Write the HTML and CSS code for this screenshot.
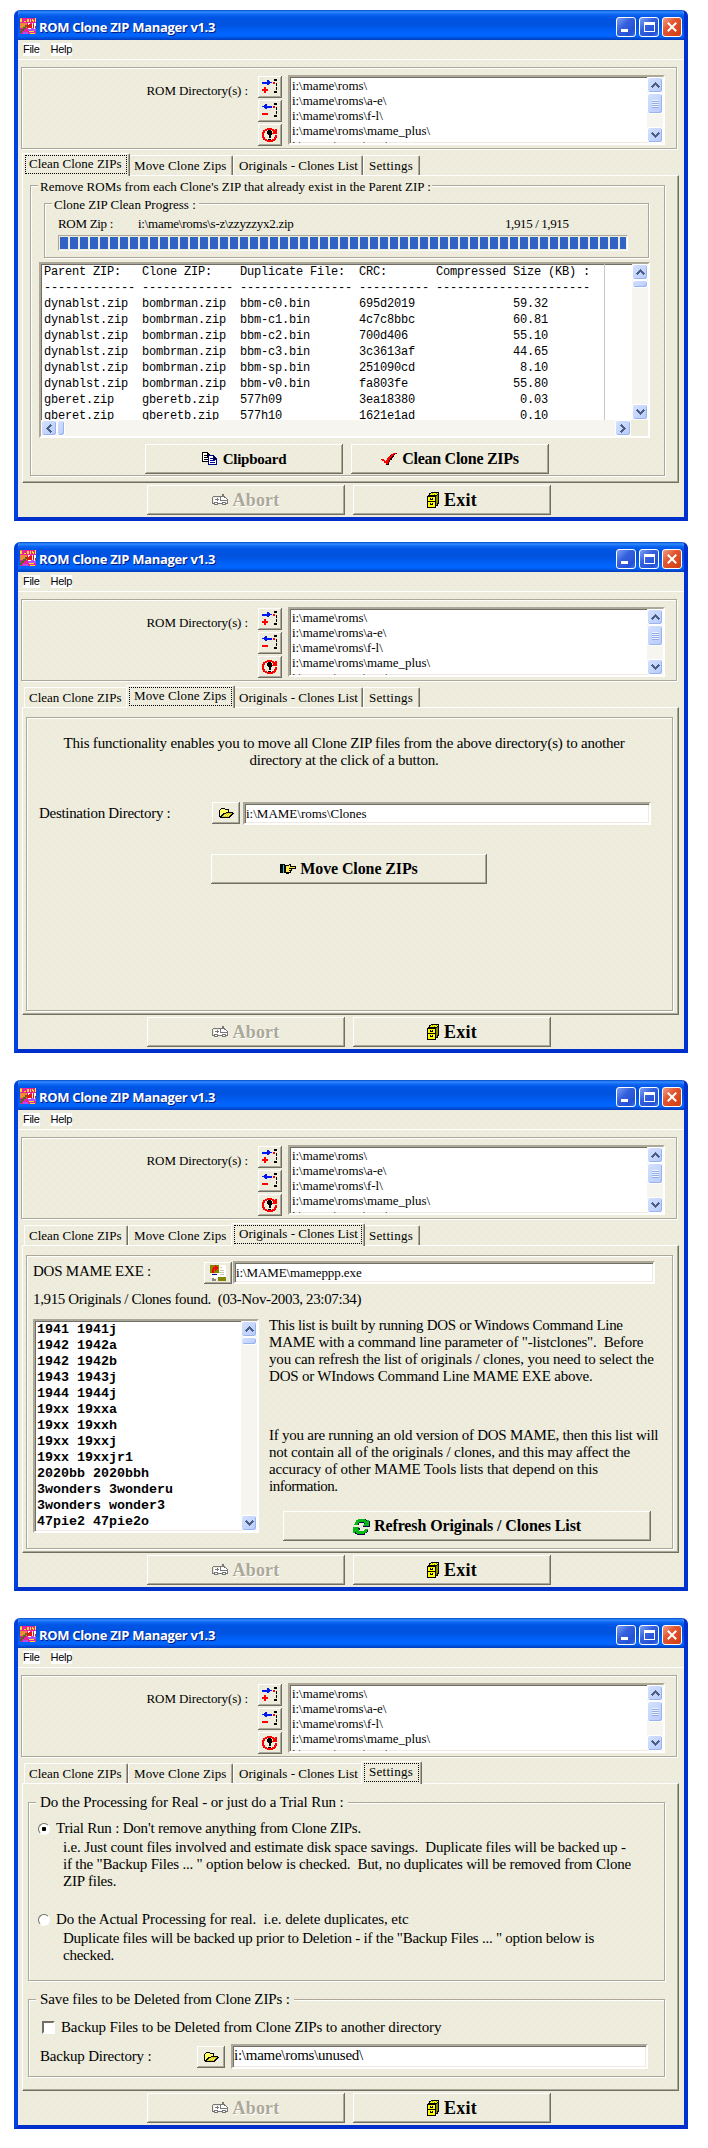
FILE: index.html
```html
<!DOCTYPE html>
<html lang="en">
<head>
<meta charset="utf-8">
<title>ROM Clone ZIP Manager v1.3</title>
<link rel="stylesheet" href="styles.css">
</head>
<body>
<svg class="defs" aria-hidden="true">
  <symbol id="i-app" viewBox="0 0 16 16"><path fill="#e8209c" d="M0 0h16v16H0z"/><path fill="#f08838" d="M0 5h7v5H0zM0 0h2v3H0z"/><path fill="#ffdc30" d="M0 1h2v3H0zM3 0h1v4h2v-1H4V0zM7 1h2v3H7zM10 1h1v3h-1zM12 1h1v1h1v2h-1zM15 0h1v4h-1zM9 13h5v1H9zM10 15h5v1h-5z"/><path fill="#b050f0" d="M8 9h8v4H8zM3 14h5v2H3z"/><path fill="#506820" d="M5 7h2v2H5zM3 9h3v2H3zM1 11h3v2H1zM0 13h2v2H0z"/><path fill="#e01818" d="M7 6h9v4H7z"/><path fill="#fff" d="M8 5h2v1h-1v4h2v1H8v-1h1V7H8zM12 5h1v5h-1zM14 5h2v3h-1v3h-1z"/></symbol>
  <symbol id="i-add" viewBox="0 0 16 16"><path fill="#0018f0" d="M0 3h5V1h2v1h1v1h2v1H8v1H7v1H5V5H0z"/><path fill="#f00" d="M2 8h2v2h2v2H4v2H2v-2H0v-2h2zM11 3h2v2h-2z"/><path d="M12 0h3v2h-3zM14 4h1v3h-1zM14 8h1v3h-1zM12 12h3v2h-3z"/></symbol>
  <symbol id="i-del" viewBox="0 0 16 16"><path fill="#0018f0" d="M10 3H5V1H3v1H2v1H0v1h2v1h1v1h2V5h5z"/><path fill="#f00" d="M0 10h6v2H0zM11 3h2v2h-2z"/><path d="M12 0h3v2h-3zM14 4h1v3h-1zM14 8h1v3h-1zM12 12h3v2h-3z"/></symbol>
  <symbol id="i-reload" viewBox="0 0 16 16"><path fill="#f00" d="M5 1h5v1h2v1h1V2h2v5h-5V6h1V4h-1V3H5v1H3v2H2v4h1v2h2v1h5v-1h2v-2h1V8h2v3h-1v2h-1v1h-2v1H5v-1H3v-1H1v-2H0V5h1V3h2V2h2z"/><path d="M6 3h3v1h1v4H9v3H7V8H6V7H5V4h1zM6 12h3v1H6z"/></symbol>
  <symbol id="i-copy" viewBox="0 0 16 14"><path fill="#fff" stroke="#000" d="M.5.5h5l3 3v6h-8z"/><path stroke="#000" d="M2 3.5h3M2 5.500h4M2 7.500h4M5.500 1v3h3"/><path fill="#fff" stroke="#00008b" d="M6.500 3.500h5l3 3v6h-8z"/><path stroke="#00008b" d="M8 6.500h3M8 8.500h5M8 10.500h5M11.500 4v3h3"/></symbol>
  <symbol id="i-check" viewBox="0 0 16 14"><path fill="#300" d="M1 8h3v1h2V7h1V5h2V3h2V2h2V1h3v1h-2v1h-1v2h-1v1h-1v2H9v2H8v3H5v-2H3V9H1z"/><path fill="#f00" d="M0 7h3v1h1v1h1V8h1V6h1V5h1V4h2V2h2V1h3v1h-2v1h-1v1h-1v1h-1v1h-1v2H8v2H7v2H5v-1H3V9H1V8H0z"/></symbol>
  <symbol id="i-abort" viewBox="0 0 16 12"><path fill="#fff" d="M2 4h7V2h3v2h3v5H2z"/><path fill="none" stroke="#777" d="M.5 2.500h8v4h7M.5 2.500v7h2m3 0h5m3 0h2v-4l-2-2-2-1h-3M3 5.500h4M5 4v3M10.500 2V.5h1V2"/><circle cx="4" cy="9.500" r="1.500" fill="#fff" stroke="#777"/><circle cx="12" cy="9.500" r="1.500" fill="#fff" stroke="#777"/></symbol>
  <symbol id="i-exit" viewBox="0 0 12 16"><path d="M1 3h1V1h2V0h8v12h-1v2H9v2H0V4h1z"/><path fill="#ff0" d="M1 5h7v10H1z"/><path fill="#8a8600" d="M9 4h1V3h1v8h-1v2H9z"/><path fill="#ff0" d="M3 2h1V1h7v1h-1v1H3z"/><path fill="#8a8600" d="M5 1h1v1H5zM7 2h1v1H7zM9 1h1v1H9z"/><path d="M1 9h7v1H1zM3 6h3v2H3zM3 11h3v2H3z"/><path fill="#ff0" d="M4 6h1v1H4zM4 11h1v1H4z"/></symbol>
  <symbol id="i-open" viewBox="0 0 15 11"><path d="M2 0h4v1h4v3h4v1h1v1h-1v1h-1v1h-1v1h-1v1H1V9H0V2h1V1h1z"/><path fill="#ff6" d="M2 1h4v1h3v2H7v1H4v1H3v1H2v1H1V2h1z"/><path fill="#d8cc20" d="M5 6h2V5h6v1h-1v1h-1v1h-1v1H3V8h1V7h1z"/><path fill="#ff6" d="M6 6h1v1H6zM8 6h1v1H8zM10 6h1v1h-1zM5 7h1v1H5zM7 7h1v1H7zM9 7h1v1H9z"/></symbol>
  <symbol id="i-hand" viewBox="0 0 16 10"><path d="M0 0h5v9H0z"/><path fill="#20d8e8" d="M3 1h1v8H3z"/><path d="M5 1h4V0h2v2h5v3h-4v2h-1v2H9v1H6V9H5z"/><path fill="#ffe84a" d="M6 2h3V1h1v2h5v1H9v1h2v1H9v1h1v1H7V8H6z"/></symbol>
  <symbol id="i-refresh" viewBox="0 0 17 17"><path fill="#060848" d="M3 5V3h2V1h8v1h2v1h2v6h-7V7h1V5H6v2H2zM0 10h7v2H6v2h5v-2h4v2h-1v1h-2v2H4v-1H2v-1H0z"/><path fill="#08b818" d="M1 6h1V4h1V2h2V1h7v1h1v1h1V2h2v6h-6V7h1V6h1V5h-1V4H6v1H5v2H1zM0 9h6v1H5v1h1v2h5v-1h1v-1h3v1h-1v2h-1v1h-2v1H4v-1H3v-1H2v1H0z"/></symbol>
  <symbol id="i-exe" viewBox="0 0 16 16"><path fill="#fff" d="M6 0h10v13H1V9h5z"/><path fill="#858500" d="M0 0h9v8H0zM8 12h8v4H8z"/><path fill="#f00" d="M2 4h1V2h2V0h1v1h1v1h1v2H7v1H6v1H5V4H4v4H2z"/><path fill="#ccc8b0" d="M10 2h2v1h-2zM10 5h4v1h-4zM9 7h5v1H9zM10 9h4v1h-4z"/><path fill="#00008b" d="M2 9h5v1H2z"/><path fill="#888" d="M2 13h2v1h2v2H2z"/></symbol>
  <symbol id="i-up" viewBox="0 0 9 6"><path d="M4 0h1v1h1v1h1v1h1v1h1v1H8v1H7V5H6V4H5V3H4v1H3v1H2v1H1V5H0V4h1V3h1V2h1V1h1z"/></symbol>
  <symbol id="i-down" viewBox="0 0 9 6"><path d="M4 6h1V5h1V4h1V3h1V2h1V1H8V0H7v1H6v1H5v1H4V2H3V1H2V0H1v1H0v1h1v1h1v1h1v1h1z"/></symbol>
  <symbol id="i-left" viewBox="0 0 6 9"><path d="M0 4h1V3h1V2h1V1h1V0h1v1h1v1H5v1H4v1H3v1h1v1h1v1h1v1H5v1H4V8H3V7H2V6H1V5H0z"/></symbol>
  <symbol id="i-right" viewBox="0 0 6 9"><path d="M6 4H5V3H4V2H3V1H2V0H1v1H0v1h1v1h1v1h1v1H2v1H1v1H0v1h1v1h1V8h1V7h1V6h1V5h1z"/></symbol>
</svg>

<main class="page">

<section class="win">
  <header class="title"><svg class="app"><use href="#i-app"/></svg><h1>ROM Clone ZIP Manager v1.3</h1><span class="cap min"></span><span class="cap max"></span><span class="cap close"></span></header>
  <nav class="menu"><span>File</span><span>Help</span></nav>
  <div class="dirs"><label>ROM Directory(s) :</label>
    <div class="tools"><button class="btn"><svg><use href="#i-add"/></svg></button><button class="btn"><svg><use href="#i-del"/></svg></button><button class="btn"><svg><use href="#i-reload"/></svg></button></div>
    <div class="box dirlist"><div class="lines">i:\mame\roms\<br>i:\mame\roms\a-e\<br>i:\mame\roms\f-l\<br>i:\mame\roms\mame_plus\<br>i:\mame\roms\m-r\</div>
      <div class="vbar"><i class="sb"><svg><use href="#i-up"/></svg></i><i class="thumb grip"></i><i class="sb end"><svg><use href="#i-down"/></svg></i></div></div>
  </div>
  <div class="tabs"><span class="tab t1 on">Clean Clone ZIPs</span><span class="tab t2">Move Clone Zips</span><span class="tab t3">Originals - Clones List</span><span class="tab t4">Settings</span></div>
  <div class="panel clean">
    <div class="group outer"><span class="legend sm">Remove ROMs from each Clone's ZIP that already exist in the Parent ZIP :</span>
      <div class="group prog"><span class="legend sm">Clone ZIP Clean Progress :</span>
        <div class="status"><span class="k">ROM Zip :</span><span class="f">i:\mame\roms\s-z\zzyzzyx2.zip</span><span class="n">1,915 / 1,915</span></div>
        <div class="bar"><div class="fill"></div></div>
      </div>
      <div class="box report">
        <div class="row"><pre>Parent ZIP:   Clone ZIP:    Duplicate File:  CRC:       Compressed Size (KB) :
------------- ------------- ---------------- ---------- ----------------------
dynablst.zip  bombrman.zip  bbm-c0.bin       695d2019              59.32
dynablst.zip  bombrman.zip  bbm-c1.bin       4c7c8bbc              60.81
dynablst.zip  bombrman.zip  bbm-c2.bin       700d406               55.10
dynablst.zip  bombrman.zip  bbm-c3.bin       3c3613af              44.65
dynablst.zip  bombrman.zip  bbm-sp.bin       251090cd               8.10
dynablst.zip  bombrman.zip  bbm-v0.bin       fa803fe               55.80
gberet.zip    gberetb.zip   577h09           3ea18380               0.03
gberet.zip    gberetb.zip   577h10           1621e1ad               0.10</pre>
        <div class="vbar"><i class="sb"><svg><use href="#i-up"/></svg></i><i class="thumb short"></i><i class="sb end"><svg><use href="#i-down"/></svg></i></div></div>
        <div class="hrow"><div class="hbar"><i class="sb"><svg class="h"><use href="#i-left"/></svg></i><i class="thumb"></i><i class="sb end"><svg class="h"><use href="#i-right"/></svg></i></div></div>
      </div>
      <div class="pair"><button class="btn b15"><svg class="w16x14"><use href="#i-copy"/></svg>Clipboard</button><button class="btn b16"><svg class="w16x14"><use href="#i-check"/></svg>Clean Clone ZIPs</button></div>
    </div>
  </div>
  <footer class="foot"><button class="btn off"><svg class="w16x12"><use href="#i-abort"/></svg>Abort</button><button class="btn"><svg class="w12x16"><use href="#i-exit"/></svg>Exit</button></footer>
</section>

<section class="win">
  <header class="title"><svg class="app"><use href="#i-app"/></svg><h1>ROM Clone ZIP Manager v1.3</h1><span class="cap min"></span><span class="cap max"></span><span class="cap close"></span></header>
  <nav class="menu"><span>File</span><span>Help</span></nav>
  <div class="dirs"><label>ROM Directory(s) :</label>
    <div class="tools"><button class="btn"><svg><use href="#i-add"/></svg></button><button class="btn"><svg><use href="#i-del"/></svg></button><button class="btn"><svg><use href="#i-reload"/></svg></button></div>
    <div class="box dirlist"><div class="lines">i:\mame\roms\<br>i:\mame\roms\a-e\<br>i:\mame\roms\f-l\<br>i:\mame\roms\mame_plus\<br>i:\mame\roms\m-r\</div>
      <div class="vbar"><i class="sb"><svg><use href="#i-up"/></svg></i><i class="thumb grip"></i><i class="sb end"><svg><use href="#i-down"/></svg></i></div></div>
  </div>
  <div class="tabs"><span class="tab t1">Clean Clone ZIPs</span><span class="tab t2 on">Move Clone Zips</span><span class="tab t3">Originals - Clones List</span><span class="tab t4">Settings</span></div>
  <div class="panel">
    <div class="group full move">
      <p class="intro">This functionality enables you to move all Clone ZIP files from the above directory(s) to another<br>directory at the click of a button.</p>
      <div class="field dest"><label class="s30">Destination Directory :</label><button class="btn"><svg class="w15x11"><use href="#i-open"/></svg></button><div class="box input">i:\MAME\roms\Clones</div></div>
      <button class="btn b16 go"><svg class="w16x10"><use href="#i-hand"/></svg>Move Clone ZIPs</button>
    </div>
  </div>
  <footer class="foot"><button class="btn off"><svg class="w16x12"><use href="#i-abort"/></svg>Abort</button><button class="btn"><svg class="w12x16"><use href="#i-exit"/></svg>Exit</button></footer>
</section>

<section class="win">
  <header class="title"><svg class="app"><use href="#i-app"/></svg><h1>ROM Clone ZIP Manager v1.3</h1><span class="cap min"></span><span class="cap max"></span><span class="cap close"></span></header>
  <nav class="menu"><span>File</span><span>Help</span></nav>
  <div class="dirs"><label>ROM Directory(s) :</label>
    <div class="tools"><button class="btn"><svg><use href="#i-add"/></svg></button><button class="btn"><svg><use href="#i-del"/></svg></button><button class="btn"><svg><use href="#i-reload"/></svg></button></div>
    <div class="box dirlist"><div class="lines">i:\mame\roms\<br>i:\mame\roms\a-e\<br>i:\mame\roms\f-l\<br>i:\mame\roms\mame_plus\<br>i:\mame\roms\m-r\</div>
      <div class="vbar"><i class="sb"><svg><use href="#i-up"/></svg></i><i class="thumb grip"></i><i class="sb end"><svg><use href="#i-down"/></svg></i></div></div>
  </div>
  <div class="tabs"><span class="tab t1">Clean Clone ZIPs</span><span class="tab t2">Move Clone Zips</span><span class="tab t3 on">Originals - Clones List</span><span class="tab t4">Settings</span></div>
  <div class="panel">
    <div class="group full orig">
      <div class="field exe"><label>DOS MAME EXE :</label><button class="btn"><svg><use href="#i-exe"/></svg></button><div class="box input">i:\MAME\mameppp.exe</div></div>
      <p class="found s36">1,915 Originals / Clones found.&nbsp; (03-Nov-2003, 23:07:34)</p>
      <div class="cols">
        <div class="box games"><pre>1941 1941j
1942 1942a
1942 1942b
1943 1943j
1944 1944j
19xx 19xxa
19xx 19xxh
19xx 19xxj
19xx 19xxjr1
2020bb 2020bbh
3wonders 3wonderu
3wonders wonder3
47pie2 47pie2o</pre>
          <div class="vbar"><i class="sb"><svg><use href="#i-up"/></svg></i><i class="thumb short"></i><i class="sb end"><svg><use href="#i-down"/></svg></i></div></div>
        <div class="notes">
          <p><span class="s30">This list is built by running DOS or Windows Command Line</span><br>MAME with a command line parameter of "-listclones".&nbsp; Before<br><span class="s17">you can refresh the list of originals / clones, you need to select the</span><br>DOS or WIndows Command Line MAME EXE above.</p>
          <p><span class="s25">If you are running an old version of DOS MAME, then this list will</span><br>not contain all of the originals / clones, and this may affect the<br><span class="s14">accuracy of other MAME Tools lists that depend on this</span><br><span class="s50">information.</span></p>
          <button class="btn b16 go"><svg class="w17x17"><use href="#i-refresh"/></svg>Refresh Originals / Clones List</button>
        </div>
      </div>
    </div>
  </div>
  <footer class="foot"><button class="btn off"><svg class="w16x12"><use href="#i-abort"/></svg>Abort</button><button class="btn"><svg class="w12x16"><use href="#i-exit"/></svg>Exit</button></footer>
</section>

<section class="win">
  <header class="title"><svg class="app"><use href="#i-app"/></svg><h1>ROM Clone ZIP Manager v1.3</h1><span class="cap min"></span><span class="cap max"></span><span class="cap close"></span></header>
  <nav class="menu"><span>File</span><span>Help</span></nav>
  <div class="dirs"><label>ROM Directory(s) :</label>
    <div class="tools"><button class="btn"><svg><use href="#i-add"/></svg></button><button class="btn"><svg><use href="#i-del"/></svg></button><button class="btn"><svg><use href="#i-reload"/></svg></button></div>
    <div class="box dirlist"><div class="lines">i:\mame\roms\<br>i:\mame\roms\a-e\<br>i:\mame\roms\f-l\<br>i:\mame\roms\mame_plus\<br>i:\mame\roms\m-r\</div>
      <div class="vbar"><i class="sb"><svg><use href="#i-up"/></svg></i><i class="thumb grip"></i><i class="sb end"><svg><use href="#i-down"/></svg></i></div></div>
  </div>
  <div class="tabs"><span class="tab t1">Clean Clone ZIPs</span><span class="tab t2">Move Clone Zips</span><span class="tab t3">Originals - Clones List</span><span class="tab t4 on">Settings</span></div>
  <div class="panel settings">
    <div class="group mode"><span class="legend s12">Do the Processing for Real - or just do a Trial Run :</span>
      <div class="opt"><i class="radio sel"></i>Trial Run : Don't remove anything from Clone ZIPs.</div>
      <p><span class="s17">i.e. Just count files involved and estimate disk space savings.&nbsp; Duplicate files will be backed up -</span><br>if the "Backup Files ... " option below is checked.&nbsp; But, no duplicates will be removed from Clone<br>ZIP files.</p>
      <div class="opt second s09"><i class="radio"></i>Do the Actual Processing for real.&nbsp; i.e. delete duplicates, etc</div>
      <p class="s25">Duplicate files will be backed up prior to Deletion - if the "Backup Files ... " option below is<br>checked.</p>
    </div>
    <div class="group save"><span class="legend s12">Save files to be Deleted from Clone ZIPs :</span>
      <div class="opt chk s14"><i class="check"></i>Backup Files to be Deleted from Clone ZIPs to another directory</div>
      <div class="field back"><label>Backup Directory :</label><button class="btn"><svg class="w15x11"><use href="#i-open"/></svg></button><div class="box input">i:\mame\roms\unused\</div></div>
    </div>
  </div>
  <footer class="foot"><button class="btn off"><svg class="w16x12"><use href="#i-abort"/></svg>Abort</button><button class="btn"><svg class="w12x16"><use href="#i-exit"/></svg>Exit</button></footer>
</section>

</main>
</body>
</html>
```
FILE: styles.css
```css
:root {
  --face: #eeeddd;
  --mid: #aca899;
  --dark: #716f64;
}
* { box-sizing: border-box; }
body {
  margin: 0;
  background: #fff;
  color: #000;
  font: 15px/17px "Liberation Serif", serif;
  letter-spacing: -.2px;
}
p, h1, pre { margin: 0; }
svg { display: block; width: 16px; height: 16px; shape-rendering: crispEdges; flex: none; }
.defs { position: absolute; width: 0; height: 0; }

.page { display: flex; flex-direction: column; padding: 10px 0 19px 14px; }
.win {
  display: flex; flex-direction: column;
  width: 674px; height: 511px;
  border: 4px solid #0042e0; border-top: 0;
  border-right-color: #0030d0;
  border-bottom-color: #0030cc;
  border-radius: 6px 6px 0 0;
  background-color: var(--face);
  background-image: radial-gradient(circle, #f2e4d6 .6px, transparent 1px), radial-gradient(circle, #e9ead6 .6px, transparent 1px);
  background-size: 8px 8px, 8px 8px;
  background-position: 0 0, 4px 4px;
  overflow: hidden;
}
.win + .win { margin-top: 27px; }
.win:nth-child(2) { margin-top: 21px; }

/* Title bar */
.title {
  display: flex; align-items: center;
  height: 30px; margin: 0 -4px; padding: 0 6px;
  background: linear-gradient(#0748c8 0, #2f8cff 2px, #1068f4 4px, #0055e5 7px, #0052de 14px, #0062fa 22px, #0066ff 26px, #0050d8 28px, #003cc0 30px);
}
.title .app { margin-top: 2px; }
.title h1 {
  flex: 1; padding: 0 0 0 3px; margin-top: 4px;
  color: #fff; font: bold 13px/16px "Open Sans", sans-serif; letter-spacing: -.33px;
  text-shadow: 1px 1px 0 #001a80;
}
.cap {
  position: relative;
  width: 20px; height: 20px; margin: 3px 0 0 3px;
  border: 1px solid #fff; border-radius: 3px;
  background: linear-gradient(135deg, #7ea2f4, #3560dd 40%, #2450d6 80%, #3c78f0);
}
.cap.close { background: linear-gradient(135deg, #f0a088, #e25530 40%, #d03c10); }
.min::before { content: ""; position: absolute; left: 4px; bottom: 4px; width: 7px; height: 3px; background: #fff; }
.max::before { content: ""; position: absolute; inset: 4px 3px 4px 4px; border: 1px solid #fff; border-top-width: 3px; }
.close::before, .close::after { content: ""; position: absolute; left: 3px; top: 8px; width: 12px; height: 2px; background: #fff; transform: rotate(45deg); }
.close::after { transform: rotate(-45deg); }

/* Menu bar */
.menu {
  display: flex; gap: 11px; align-items: flex-start;
  height: 20px; padding: 3px 0 0 5px;
  border-bottom: 1px solid #fff;
  font: 11px/13px "Liberation Sans", sans-serif; letter-spacing: -.3px;
}
.menu span { background: #fff; }

/* Common bevels */
.btn {
  display: flex; align-items: center; justify-content: center;
  margin: 0; padding: 0; border: 0;
  background: transparent;
  box-shadow: inset -1px -1px 0 var(--dark), inset 1px 1px 0 #fff, inset -2px -2px 0 var(--mid);
  color: #000; font: bold 18px/20px "Liberation Serif", serif; letter-spacing: .22px;
  gap: 5px; white-space: nowrap;
}
.b15 { font-size: 15px; letter-spacing: -.26px; }
.b16 { font-size: 16px; letter-spacing: -.11px; }
.clean .b16 { letter-spacing: -.28px; }
.btn.off { color: #aca899; text-shadow: 1px 1px 0 #fff; }
.box {
  background: #fff;
  border: 2px solid; border-color: var(--mid) #fff #fff var(--mid);
  box-shadow: inset 1px 1px 0 var(--dark), inset -1px -1px 0 #f1e8df;
}
.group {
  display: flex; flex-direction: column;
  border: 1px solid var(--mid);
  box-shadow: 1px 1px 0 #fff, inset 1px 1px 0 #fff;
}
.legend { align-self: flex-start; background: var(--face); white-space: pre; height: 17px; }
.sm { font-size: 13px; letter-spacing: 0; }

.w16x14 { height: 14px; }
.w16x12 { height: 12px; }
.w16x10 { height: 10px; }
.w12x16 { width: 12px; }
.w15x11 { width: 15px; height: 11px; }
.w17x17 { width: 17px; height: 17px; }

/* Directory list */
.dirs {
  display: flex; align-items: flex-start;
  width: 656px; height: 82px; margin: 7px 0 0 3px; padding: 7px 0 0;
  border: 1px solid var(--mid);
  box-shadow: 1px 1px 0 #fff, inset 1px 1px 0 #fff;
  flex: none;
}
.dirs label { width: 236px; padding: 7px 10px 0 0; text-align: right; font-size: 13px; letter-spacing: -.1px; }
.tools { display: flex; flex-direction: column; gap: 2px; padding-top: 1px; }
.tools .btn { width: 24px; height: 22px; }
.dirlist { display: flex; width: 377px; height: 70px; margin-left: 6px; }
.lines { flex: 1; padding: 1px 0 0 2px; font-size: 13px; line-height: 15px; letter-spacing: -.06px; overflow: hidden; height: 66px; }

/* Scroll bars */
.vbar, .hbar { display: flex; background: #f7f5f0; }
.vbar { flex-direction: column; width: 16px; }
.sb, .thumb {
  display: flex; align-items: center; justify-content: center;
  width: 16px; height: 16px; flex: none;
  border: 1px solid #fff; border-radius: 3px;
  background: linear-gradient(135deg, #d4e0ff, #b8cbfa);
  box-shadow: inset -1px -1px 0 #98b4ee;
}
.sb svg { width: 9px; height: 6px; fill: #4a6084; }
.sb svg.h { width: 6px; height: 9px; }
.vbar .end { margin-top: auto; }
.hbar .end { margin-left: auto; }
.thumb.short { height: 8px; }
.thumb.grip { height: 21px; }
.grip::before { content: ""; width: 7px; height: 8px; background: repeating-linear-gradient(#eef4ff 0 1px, #8fabe8 1px 2px); }

/* Tabs */
.tabs { display: flex; height: 26px; padding: 6px 0 0 6px; flex: none; font-size: 13px; letter-spacing: 0; }
.tab {
  position: relative;
  height: 20px; padding: 2px 0 0 5px;
  border: 1px solid #fff; border-bottom: 0; border-right: 1px solid var(--dark);
  border-radius: 2px 2px 0 0;
  box-shadow: inset -1px 0 0 var(--mid);
  white-space: nowrap; line-height: 15px;
}
.t1 { width: 104px; padding-left: 4px; } .t2 { width: 105px; letter-spacing: .1px; } .t3 { width: 130px; } .t4 { width: 57px; letter-spacing: .26px; }
.tab.on {
  z-index: 1; height: 23px; margin: -2px -2px -1px; padding: 2px 0 0 7px;
  background: var(--face);
}
.tab.on.t1 { width: 108px; padding-left: 6px; } .tab.on.t2 { width: 109px; } .tab.on.t3 { width: 134px; } .tab.on.t4 { width: 61px; }
.tab.on::after { content: ""; position: absolute; inset: 1px 2px 2px 2px; border: 1px dotted #000; }
.panel {
  width: 657px; height: 308px; margin-left: 4px; flex: none;
  border: 1px solid #fff; border-right: 1px solid var(--dark); border-bottom: 1px solid var(--dark);
  box-shadow: inset -1px -1px 0 var(--mid);
}

/* Clean tab */
.outer { width: 635px; height: 291px; margin: 9px 0 0 7px; }
.outer > .legend { margin: -8px 0 0 7px; padding: 0 1px 0 2px; }
.prog { width: 605px; height: 55px; margin: 8px 0 0 13px; }
.prog .legend { margin: -8px 0 0 7px; padding: 0 3px 0 2px; }
.status { display: flex; height: 17px; margin: 2px 0 0 13px; font-size: 13px; line-height: 17px; white-space: nowrap; }
.status .k { width: 80px; letter-spacing: -.31px; }
.status .f { width: 367px; letter-spacing: -.25px; }
.status .n { letter-spacing: -.39px; }
.bar { width: 570px; height: 16px; margin: 3px 0 0 13px; padding: 1px; border: 1px solid; border-color: var(--mid) #fff #fff var(--mid); }
.fill { width: 566px; height: 12px; background: repeating-linear-gradient(90deg, #3163c5 0 8px, transparent 8px 10px); }
.report { width: 611px; height: 176px; margin: 4px 0 0 8px; }
.report .row { display: flex; height: 156px; }
.report pre {
  flex: 1; height: 156px; padding-left: 3px; overflow: hidden;
  font: 12px/16px "Liberation Mono", monospace; letter-spacing: -.2px;
  background: linear-gradient(#c8c8c8, #c8c8c8) 563px 0 / 1px 100% no-repeat;
}
.hrow { background: var(--face); height: 16px; }
.hbar { width: 590px; height: 16px; }
.hbar .thumb { width: 8px; }
.pair { display: flex; gap: 8px; margin: 6px 0 0 114px; }
.pair .btn, .foot .btn { width: 198px; height: 30px; }
.foot { display: flex; gap: 8px; padding: 2px 0 0 129px; }
.foot .off { gap: 4px; }

/* Input rows */
.field { display: flex; align-items: flex-start; white-space: nowrap; }
.field .btn { width: 28px; height: 22px; }
.input { height: 23px; padding: 1px 0 0 1px; font-size: 13px; letter-spacing: 0; }
.full { width: 647px; height: 294px; margin: 9px 0 0 3px; }

/* Move tab */
.intro { margin-top: 17px; text-align: center; padding-right: 11px; }
.dest { margin-top: 33px; padding-left: 12px; }
.dest label { width: 173px; padding-top: 3px; }
.dest .input { width: 408px; margin-left: 3px; }
.move .go { width: 276px; height: 30px; margin: 29px 0 0 184px; gap: 4px; }

/* Originals tab */
.exe { margin-top: 5px; padding-left: 6px; }
.exe label { width: 171px; padding-top: 2px; letter-spacing: -.23px; }
.exe .btn { margin-top: 1px; }
.exe .input { width: 422px; margin-left: 1px; letter-spacing: -.1px; }
.found { margin: 7px 0 0 6px; }
.cols { display: flex; margin: 11px 0 0 6px; }
.games { display: flex; width: 226px; height: 214px; }
.games pre { flex: 1; padding: 1px 0 0 2px; font: bold 13.33px/16px "Liberation Mono", monospace; letter-spacing: 0; }
.notes { width: 385px; margin: -2px 0 0 10px; white-space: nowrap; }
.notes p + p { margin-top: 42px; }
.notes .go { width: 368px; height: 30px; margin: 16px 0 0 14px; gap: 4px; }

/* Settings tab */
.mode { width: 637px; height: 179px; margin: 18px 0 0 5px; }
.mode > .legend, .save > .legend { margin: -9px 0 0 7px; padding: 0 4px; }
.opt { display: flex; align-items: center; height: 17px; margin: 9px 0 0 9px; gap: 6px; white-space: nowrap; }
.mode p { margin: 2px 0 0 34px; white-space: nowrap; }
.opt.second { margin-top: 21px; }
.radio { width: 12px; height: 12px; border: 1px solid; border-color: var(--dark) #fff #fff var(--dark); border-radius: 50%; background: #fff; }
.sel { background: radial-gradient(circle, #000 2px, #fff 2.5px); }
.save { width: 637px; height: 78px; margin: 18px 0 0 5px; }
.opt.chk { margin: 11px 0 0 13px; gap: 6px; }
.check { width: 13px; height: 13px; border: 2px solid; border-color: var(--dark) #fff #fff var(--dark); background: #fff; }
.back { margin: 8px 0 0 11px; }
.back label { width: 157px; padding-top: 4px; }
.back .btn { margin-top: 2px; }
.back .input { width: 417px; height: 25px; margin-left: 6px; font-size: 15px; letter-spacing: -.26px; }

/* Tracking steps for individual lines */
.s09 { letter-spacing: -.09px; }
.s12 { letter-spacing: -.12px; }
.s14 { letter-spacing: -.14px; }
.s17 { letter-spacing: -.17px; }
.s25 { letter-spacing: -.25px; }
.s30 { letter-spacing: -.3px; }
.s36 { letter-spacing: -.36px; }
.s50 { letter-spacing: -.5px; }
```
